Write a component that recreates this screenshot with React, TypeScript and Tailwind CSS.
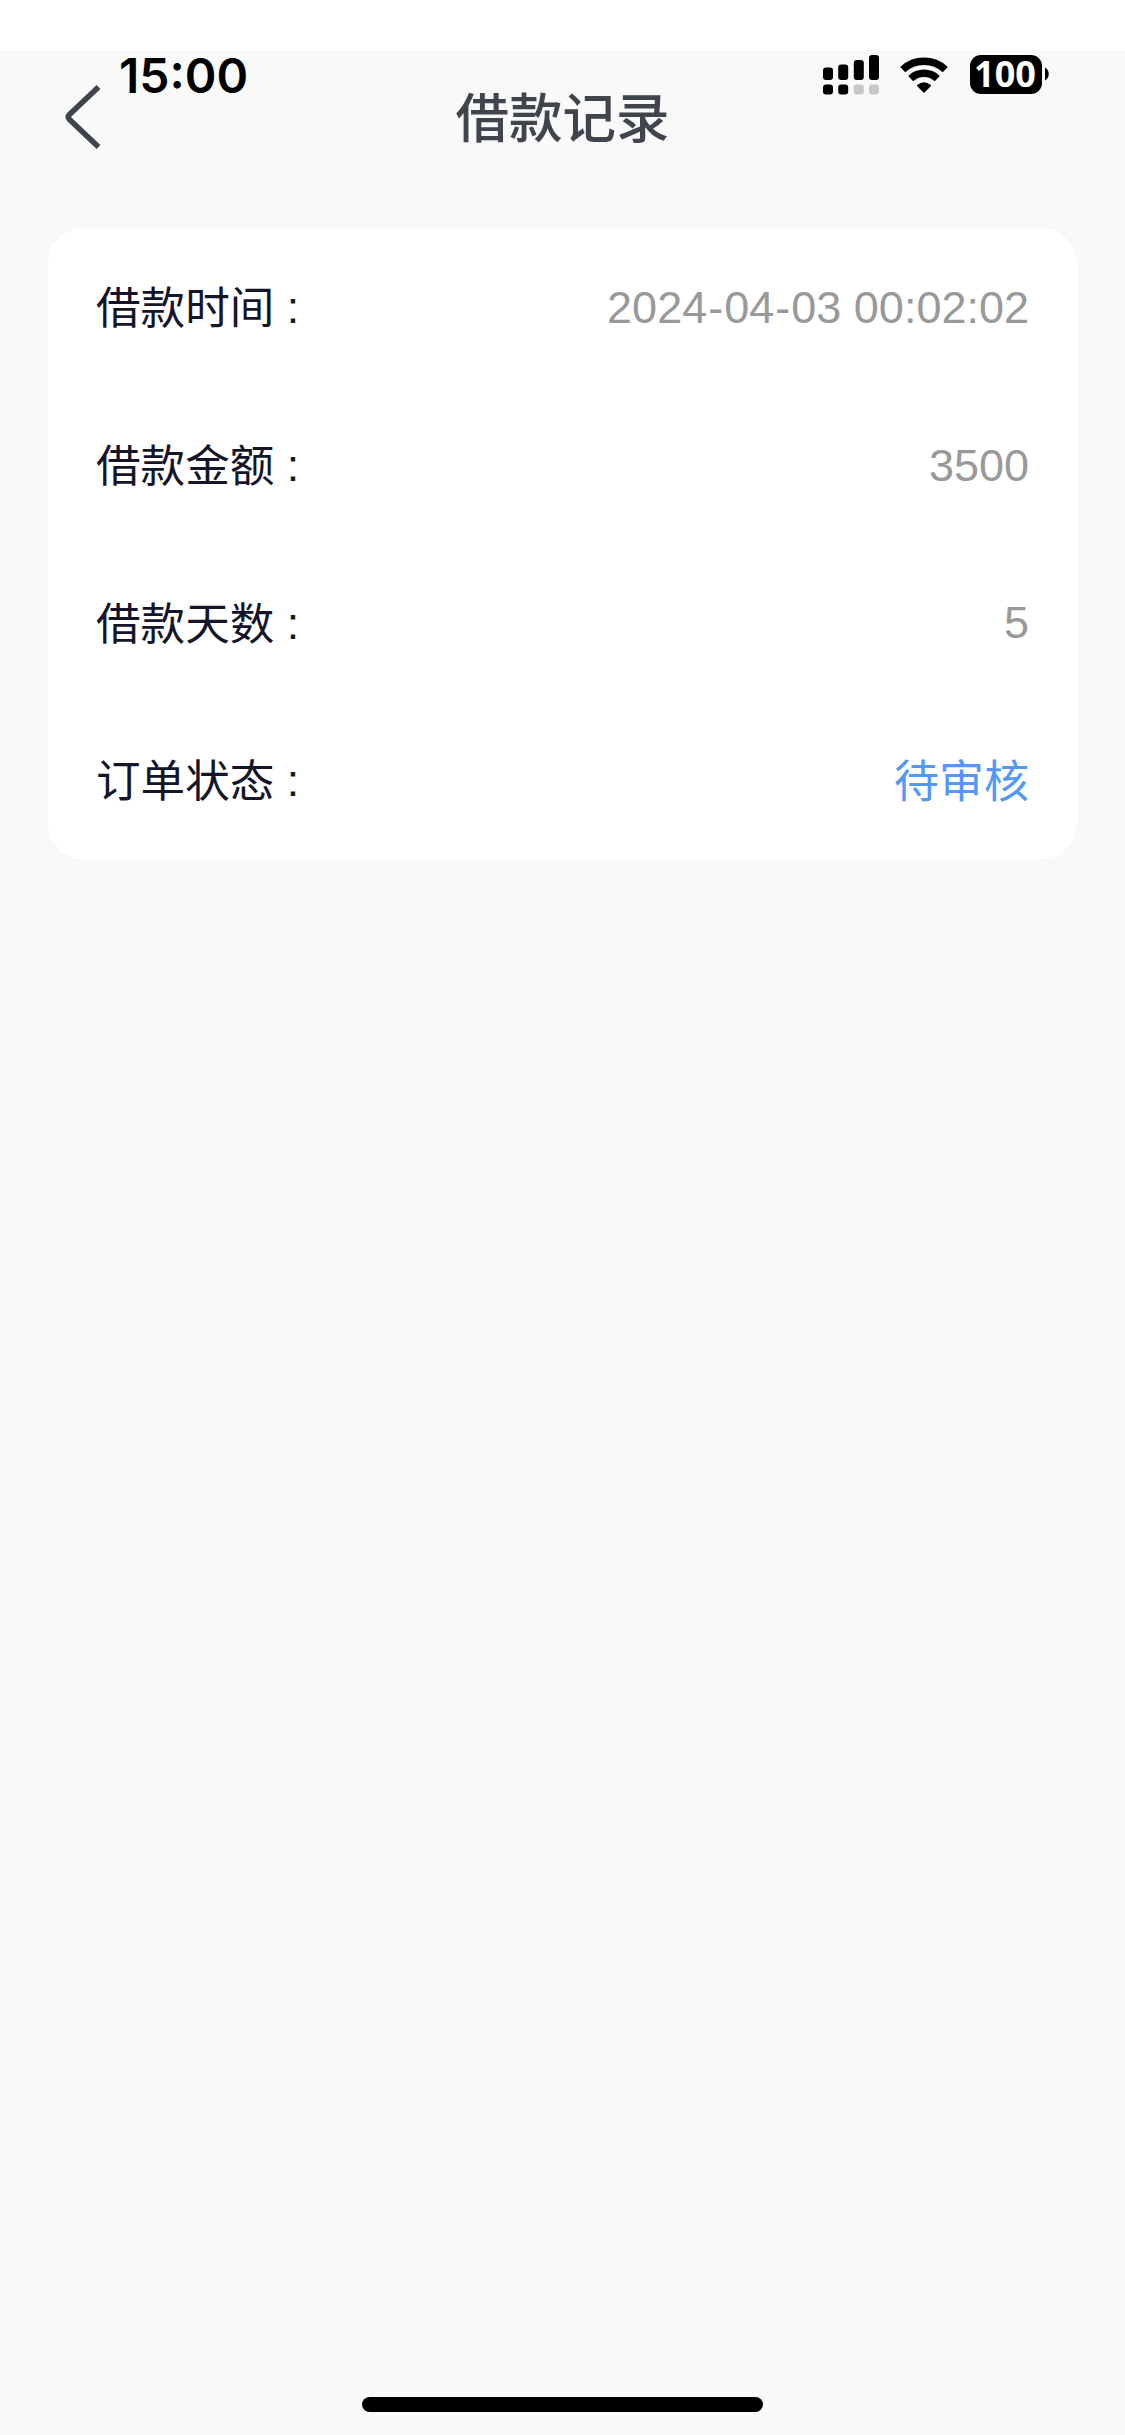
type Row = {
  label: string;
  value: string;
  active?: boolean;
};

const rows: Row[] = [
  { label: "借款时间", value: "2024-04-03 00:02:02" },
  { label: "借款金额", value: "3500" },
  { label: "借款天数", value: "5" },
  { label: "订单状态", value: "待审核", active: true },
];

function SignalIcon() {
  return (
    <svg width="57" height="40" viewBox="0 0 57 40" aria-hidden="true">
      <rect x="0" y="12.5" width="10" height="12.5" rx="3" />
      <rect x="15.2" y="9.5" width="10" height="15.5" rx="3" />
      <rect x="30.8" y="5" width="10" height="20" rx="3" />
      <rect x="46" y="0" width="10" height="25" rx="3" />
      <rect x="0" y="29.5" width="10" height="10" rx="3" />
      <rect x="15.2" y="29.5" width="10" height="10" rx="3" />
      <rect x="30.8" y="29.5" width="10" height="10" rx="3" fill="#c7c7c7" />
      <rect x="46" y="29.5" width="10" height="10" rx="3" fill="#c7c7c7" />
    </svg>
  );
}

function WifiIcon() {
  return (
    <svg width="50" height="40" viewBox="0 0 50 40" aria-hidden="true">
      <g fill="none" stroke="#000" strokeWidth="7.4">
        <path d="M3.7 14.6A31.4 31.4 0 0 1 46.3 14.6" />
        <path d="M11.7 23.6A19.4 19.4 0 0 1 38.3 23.6" />
      </g>
      <path d="M25 38L18 31.1Q17.6 30.4 18.2 29.9Q25 24.4 31.8 29.9Q32.4 30.4 32 31.1Z" />
    </svg>
  );
}

function Battery() {
  return (
    <div className="flex items-center">
      <div className="flex h-[39.5px] w-[72.5px] items-center justify-center rounded-[11px] bg-black pr-[1.5px] font-['Open_Sans',sans-serif] text-[36px] leading-none font-bold text-white">
        100
      </div>
      <svg className="ml-[2.5px]" width="5" height="14" viewBox="0 0 5 14" aria-hidden="true">
        <path d="M0 0.5C5 3 5 11 0 13.5Z" />
      </svg>
    </div>
  );
}

function StatusBar() {
  return (
    <div className="absolute inset-x-0 top-[50px] flex items-start justify-between pr-[75.5px] pl-[119px]">
      <span className="pt-px font-['Inter',sans-serif] text-[48px] leading-[50px] font-semibold text-black">
        15:00
      </span>
      <div className="flex pt-[4.5px]">
        <SignalIcon />
        <div className="ml-[19.5px]">
          <WifiIcon />
        </div>
        <div className="ml-[20.5px]">
          <Battery />
        </div>
      </div>
    </div>
  );
}

function Value({ value, active }: Row) {
  if (active) {
    return <span className="pt-[6px] text-[#5199f5]">{value}</span>;
  }
  // hyphens need a little air on both sides
  return (
    <span className="pt-[2px] text-[#999999]">
      {value.split("-").map((part, i) => (
        <span key={i}>
          {i > 0 && <span className="px-[1px]">-</span>}
          {part}
        </span>
      ))}
    </span>
  );
}

export default function App() {
  return (
    <div className="relative flex h-[2435px] w-[1125px] flex-col bg-[#f9f9f9] font-['Liberation_Sans','Noto_Sans_CJK_SC',sans-serif]">
      <div className="h-[50px] bg-white" />
      <StatusBar />

      <header className="grid h-[134px] grid-cols-[1fr_auto_1fr] items-center text-[#40444d]">
        <button type="button" aria-label="返回" className="ml-[62px] w-fit">
          <svg width="40" height="66" viewBox="0 0 40 66" fill="none" stroke="currentColor" strokeWidth="5.6">
            <path d="M36.5 3L7.5 30.5Q5 33 7.5 35.5L36.5 63" />
          </svg>
        </button>
        <h1 className="pt-[6px] text-[53.5px] leading-none font-medium">借款记录</h1>
      </header>

      <main className="mx-12 mt-[43.5px] rounded-[36px] bg-white px-12">
        {rows.map((row) => (
          <div
            key={row.label}
            className="flex h-[157.75px] items-center justify-between text-[45px] leading-none"
          >
            <span className="pt-[6px] text-[44.6px] text-[#15152a]">
              {row.label} <span className="relative -top-px">:</span>
            </span>
            <Value {...row} />
          </div>
        ))}
      </main>

      <div className="mx-auto mt-auto mb-[23px] h-[15px] w-[401px] rounded-full bg-black" />
    </div>
  );
}
